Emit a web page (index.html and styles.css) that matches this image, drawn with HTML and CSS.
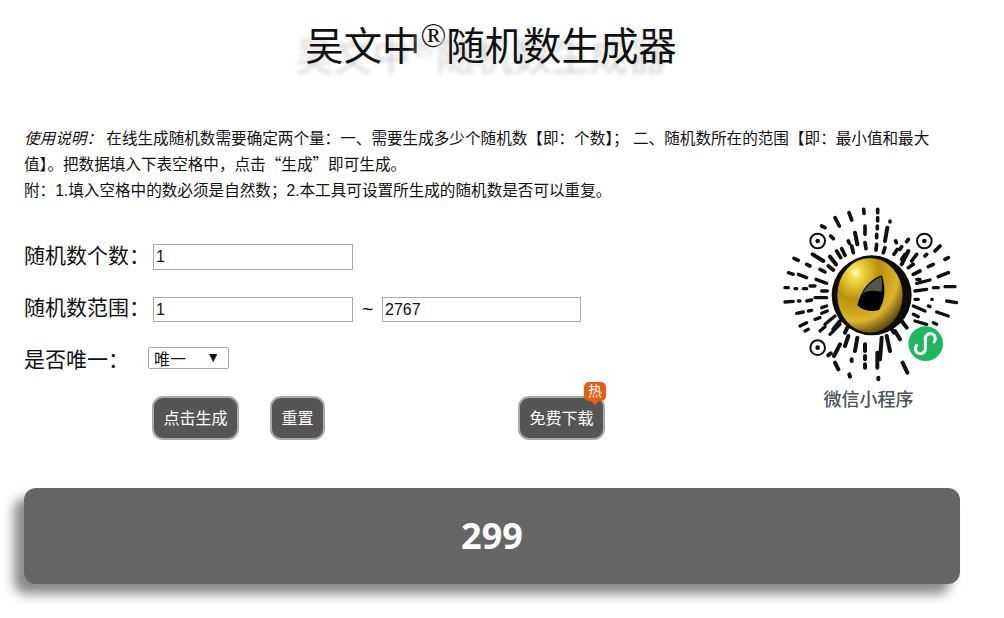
FILE: index.html
```html
<html>
<head>
    <meta http-equiv="content-type" content="text/html;charset=utf-8"/>
    <title>随机数生成器</title>
    <link rel="stylesheet" href="styles.css">
</head>
<body>
<div class="wrap">
    <h1 class="title">吴文中<sup>®</sup>随机数生成器</h1>
    <p class="intro">
        <em>使用说明&#65306;</em> 在线生成随机数需要确定两个量&#65306;一、需要生成多少个随机数【即&#65306;个数】&#65307; 二、随机数所在的范围【即&#65306;最小值和最大值】。把数据填入下表空格中&#65292;点击<span class="cjk">“生成”</span>即可生成。<br>
        附&#65306;1.填入空格中的数必须是自然数&#65307;2.本工具可设置所生成的随机数是否可以重复。
    </p>
    <div class="tool">
        <div class="form">
            <div class="row row1">
                <label class="lab">随机数个数&#65306;</label>
                <input class="txt" type="text" value="1">
            </div>
            <div class="row row2">
                <label class="lab">随机数范围&#65306;</label>
                <input class="txt" type="text" value="1">
                <span class="sep">~</span>
                <input class="txt txt2" type="text" value="2767">
            </div>
            <div class="row row3">
                <label class="lab lab2">是否唯一&#65306;</label>
                <div class="sel">唯一<i class="arrow">▼</i></div>
            </div>
            <div class="btns">
                <a class="btn btn1">点击生成</a>
                <a class="btn btn2">重置</a>
                <a class="btn btn3">免费下载
                    <span class="hot">热</span>
                </a>
            </div>
        </div>
        <div class="code">
            <svg class="qr" viewBox="0 30 600 540" width="200" height="180">
                <defs>
                    <radialGradient id="gold" cx="28%" cy="20%" r="90%">
                        <stop offset="0" stop-color="#fffbe0"/>
                        <stop offset="0.1" stop-color="#f4dc40"/>
                        <stop offset="0.4" stop-color="#b8900c"/>
                        <stop offset="0.72" stop-color="#dcb428"/>
                        <stop offset="1" stop-color="#3c3010"/>
                    </radialGradient>
                </defs>
                <g fill="none" stroke="#111" stroke-linecap="round">
                    <path stroke-width="11" d="M195 65L208 90M237 50L245 72M281 40L282 52M323 40V50M323 65V75M322 90V98M360 75V78M155 90L165 95M182 120L190 128M285 90V115M285 140L288 158M320 115V125M377 135L379 140M415 130L410 137M395 152L390 160M510 150L495 165M215 158L225 178M245 150L250 170M320 145L318 162M345 155L340 170M382 160L372 175M440 175L425 195M470 175L465 180M535 185L525 190M72 187L85 193M110 205L120 210M150 220L165 228M175 210L190 222M430 205L415 215M490 205L475 212M450 225L430 235M535 230L505 242M200 165L212 185M235 135L238 142M405 175L395 190"/>
                    <path stroke-width="10" d="M55 230L70 235M85 235L110 245M138 250L170 262M440 250H450M45 275H55M75 278H80M100 278H110M155 285H172M435 285L470 280M490 275H505M525 272H555M45 318L70 316M85 315H90M110 315L125 312M135 305H170M435 310H445M485 310H487M530 315L560 320M80 352L100 348M115 345L125 343M155 335L170 330M430 330L465 345M430 355L445 362M475 330L480 332M500 348L535 360M90 390L110 380M135 370L150 365M165 385L195 360M435 375L470 385M490 380L500 385M105 405L115 400M150 405L165 392M180 415L210 385M155 352L172 345M440 262L480 252M120 270H135"/>
                    <path stroke-width="12" d="M255 110L262 145M352 95L345 135M128 175L160 195M180 182L198 205M415 165L395 205M410 395L395 375M390 430L375 405M360 465L350 420M330 490L335 425M285 445V465M285 480V490M285 505V515M262 425L255 465M235 420L225 450M210 445L192 480M175 478L182 472M245 490V495M195 500L205 520M238 535L240 542M322 470V515M325 545V550M398 500L412 530M372 410L365 400M190 400L210 375M225 410L232 395"/>
                    <circle cx="143" cy="135" r="22" stroke-width="6"/>
                    <circle cx="463" cy="135" r="22" stroke-width="6"/>
                    <circle cx="143" cy="455" r="22" stroke-width="6"/>
                </g>
                <circle cx="143" cy="135" r="7" fill="#111"/>
                <circle cx="463" cy="135" r="7" fill="#111"/>
                <circle cx="143" cy="455" r="7" fill="#111"/>
                <circle cx="305" cy="298" r="120" fill="#0c0c0a"/>
                <ellipse cx="300" cy="298" rx="98" ry="112" fill="url(#gold)"/>
                <path d="M262 328Q280 256 336 238Q354 300 327 342Q288 352 262 328Z" fill="#000"/>
                <path d="M276 294Q298 254 334 242Q340 270 333 288Q300 278 276 294Z" fill="#55534c"/>
                <circle cx="467" cy="443" r="52" fill="#1fb860"/>
                <path d="M440 448A15 15 0 1 0 466 458V428A15 15 0 1 1 492 438" fill="none" stroke="#fff" stroke-width="9" stroke-linecap="round"/>
            </svg>
            <div class="codeName">微信小程序</div>
        </div>
    </div>
    <div class="result">299</div>
</div>
</body>
</html>
```

FILE: styles.css
```css
@charset "utf-8";
/* CSS Document */

html { background:#fff; }
body,div,h1,p,label { margin:0; padding:0; color:#111; font-family:"Liberation Sans","Noto Sans CJK SC",sans-serif; }
a { text-decoration:none; }

.wrap { padding:0 44px 0 24px; height:618px; overflow:hidden; }

.title { margin-top:22px; padding-right:2px; height:50px; line-height:50px; text-align:center; font-size:38.4px; font-weight:normal; text-shadow:-10px 10px 4px #d4d4d4; }
.title sup { font-family:"Liberation Serif",serif; font-size:34px; line-height:0; vertical-align:13px; }

.intro { margin-top:54px; font-size:15.6px; line-height:26px; }
.cjk { font-family:"Noto Sans CJK SC",sans-serif; line-height:1; }

.tool { display:flex; height:247px; }
.form { flex:1; padding-top:40px; }
.row { display:flex; align-items:center; }
.row1 { height:26px; }
.row2 { height:25px; margin-top:27px; }
.row3 { height:22px; margin-top:25px; }
.lab { width:129px; padding-bottom:7px; font-size:21px; white-space:nowrap; }
.lab2 { width:124px; padding-bottom:0; }
.txt { box-sizing:border-box; width:200px; height:100%; margin:0; padding:0 2px; border:1px solid #a9a9a9; font-family:"Liberation Sans",sans-serif; font-size:16px; color:#111; background:#fff; outline:none; }
.txt2 { width:199px; }
.sep { width:29px; text-align:center; font-size:20px; }
.sel { box-sizing:border-box; display:flex; justify-content:space-between; width:81px; height:22px; padding:1px 8px 0 5px; border:1px solid #a9a9a9; border-radius:2px; font-size:16px; line-height:22px; overflow:hidden; }
.arrow { font-style:normal; font-size:14px; line-height:16px; }

.btns { display:flex; margin:27px 0 0 128px; }
.btn { box-sizing:border-box; position:relative; display:block; height:44px; line-height:41px; border:2px solid #aaa; border-radius:11px; background:#555; color:#fff; font-size:16px; text-align:center; }
.btn1 { width:87px; }
.btn2 { width:55px; margin-left:31px; }
.btn3 { width:87px; margin-left:193px; }
.hot { position:absolute; top:-16px; right:-3px; width:22px; height:19px; line-height:18px; border-radius:5px; background:#ee5a10; color:#fff; font-size:14px; }
.hot:after { content:""; position:absolute; left:6px; top:18px; border:5px solid transparent; border-top:5px solid #ee5a10; border-bottom:0; }

.code { width:200px; margin-right:-10px; padding-top:2px; }
.qr { display:block; }
.codeName { margin-top:2px; padding-right:3px; text-align:center; font-size:18px; font-weight:500; line-height:24px; color:#4c5559; }

.result { height:96px; margin-top:37px; line-height:96px; border-radius:12px; background:#666; color:#fff; font-family:"Noto Sans",sans-serif; font-size:36px; font-weight:bold; text-align:center; box-shadow:-10px 10px 12px #888; }
```
